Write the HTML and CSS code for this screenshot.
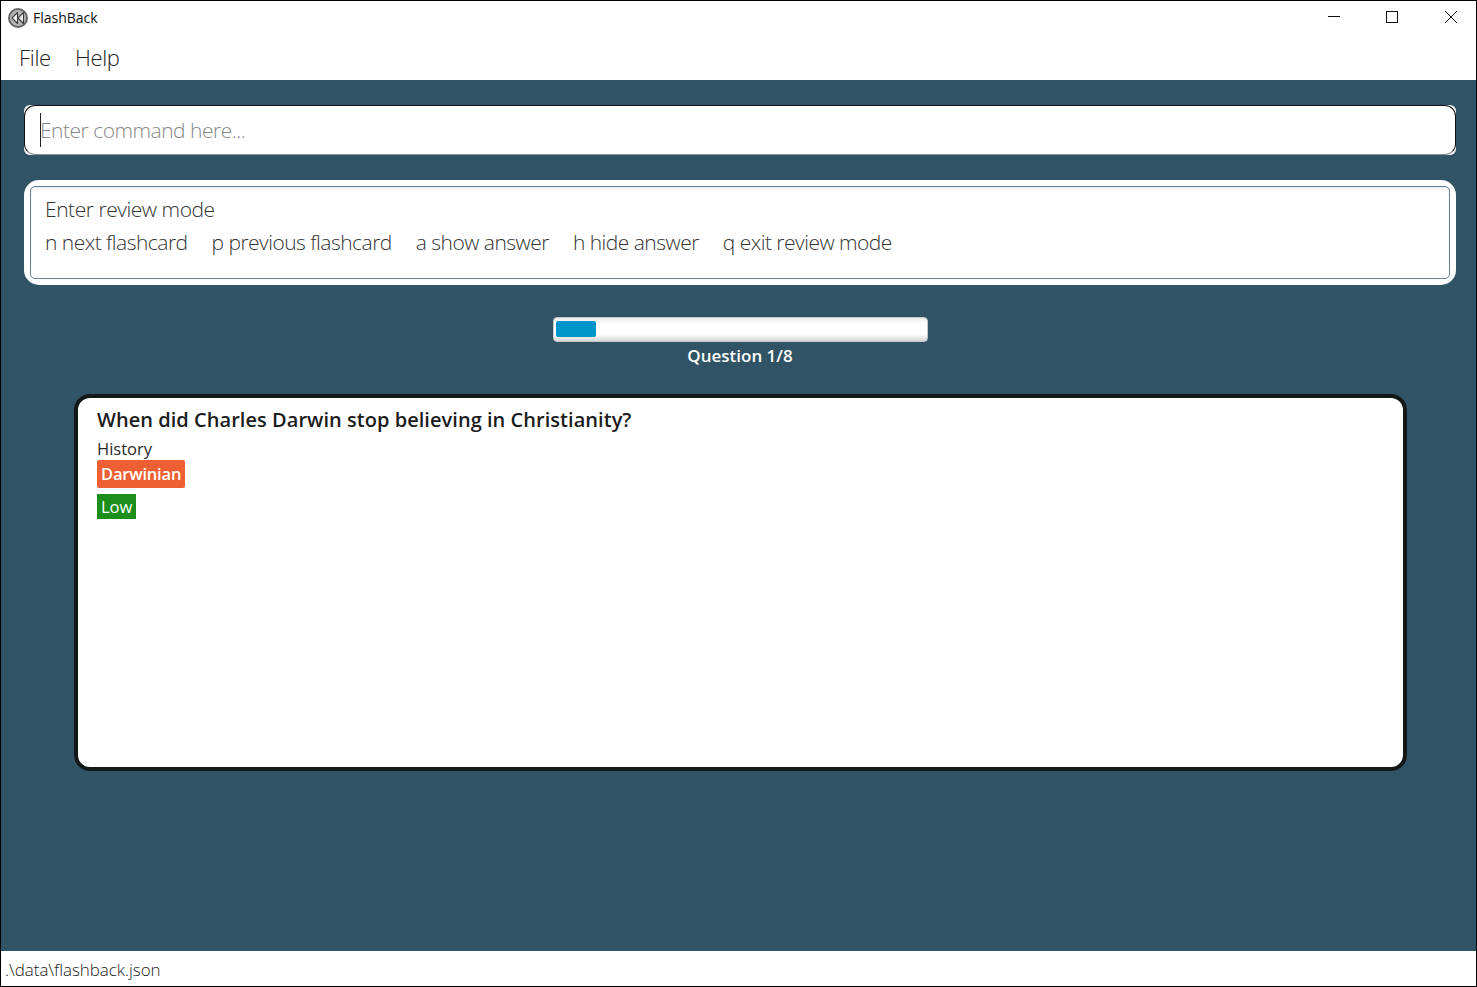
FILE: index.html
```html
<!DOCTYPE html>
<html lang="en">
<head>
<meta charset="utf-8">
<title>FlashBack</title>
<link rel="stylesheet" href="styles.css">
</head>
<body>
<div class="window">
  <header class="titlebar">
    <div class="title-left">
      <svg class="app-icon" width="20" height="20" viewBox="0 0 20 20">
        <circle cx="10" cy="10" r="9" fill="#b4b4b4" stroke="#666" stroke-width="2"/>
        <path d="M9.5 4.5 L4 10 L9.5 15.5 Z M15.5 4.5 L10 10 L15.5 15.5 Z" fill="#f4f4f4" stroke="#3c3c3c" stroke-width="1.1" stroke-linejoin="round"/>
      </svg>
      <span class="app-name">FlashBack</span>
    </div>
    <div class="win-controls">
      <svg class="win-min" width="12" height="12" viewBox="0 0 12 12"><path d="M0 5.5H12" stroke="#111" stroke-width="1" fill="none"/></svg>
      <svg width="12" height="12" viewBox="0 0 12 12"><rect x="0.5" y="0.5" width="11" height="11" stroke="#111" stroke-width="1" fill="none"/></svg>
      <svg width="12" height="12" viewBox="0 0 12 12"><path d="M0 0L12 12M12 0L0 12" stroke="#111" stroke-width="1" fill="none"/></svg>
    </div>
  </header>
  <nav class="menubar">
    <span class="menu-item">File</span>
    <span class="menu-item">Help</span>
  </nav>
  <main class="content">
    <div class="command-outer">
      <div class="command-box">
        <span class="caret"></span>
        <span class="placeholder">Enter command here...</span>
      </div>
    </div>
    <section class="result-outer">
      <div class="result-inner">
        <div class="result-line">Enter review mode</div>
        <div class="result-keys">
          <span>n next flashcard</span>
          <span>p previous flashcard</span>
          <span>a show answer</span>
          <span>h hide answer</span>
          <span>q exit review mode</span>
        </div>
      </div>
    </section>
    <section class="progress-wrap">
      <div class="progress-track"><div class="progress-fill"></div></div>
      <div class="progress-label">Question 1/8</div>
    </section>
    <article class="card">
      <h1 class="question">When did Charles Darwin stop believing in Christianity?</h1>
      <div class="category">History</div>
      <div class="tag-row"><span class="tag">Darwinian</span></div>
      <div class="level-row"><span class="level">Low</span></div>
    </article>
  </main>
  <footer class="statusbar">.\data\flashback.json</footer>
</div>
</body>
</html>
```

FILE: styles.css
```css
* { box-sizing: border-box; }
html, body { margin: 0; height: 100%; overflow: hidden; }
body { font-family: "Open Sans", "Noto Sans", "Liberation Sans", sans-serif; background: #fff; }

.window {
  width: 1477px;
  height: 987px;
  border: 1px solid #000;
  display: flex;
  flex-direction: column;
}

.titlebar {
  height: 33px;
  flex: none;
  display: flex;
  justify-content: space-between;
  align-items: center;
  padding: 0 19px 0 7px;
}
.title-left { display: flex; align-items: center; gap: 5px; }
.app-icon { display: block; }
.app-name { font-size: 14px; color: #111; font-weight: 400; }
.win-controls { display: flex; gap: 47px; align-items: center; margin-top: -2px; }
.win-controls svg { display: block; }
.win-controls .win-min { margin-right: -1px; }

.menubar {
  height: 46px;
  flex: none;
  display: flex;
  align-items: center;
  gap: 24px;
  padding: 4px 0 5px 18px;
}
.menu-item { font-size: 22px; font-weight: 300; color: #222; letter-spacing: -0.3px; }

.content {
  flex: 1;
  background: #305366;
  padding: 25px 20px 0 23px;
  display: flex;
  flex-direction: column;
}

.command-outer {
  height: 50px;
  flex: none;
  background: #fff;
  border-radius: 6px;
}
.command-box {
  height: 100%;
  border: 1px solid #111;
  border-bottom: 1px solid #8f8f8f;
  border-radius: 11px;
  display: flex;
  align-items: center;
  padding-left: 15px;
}
.caret { width: 1px; height: 34px; background: #222; flex: none; }
.placeholder { font-size: 21px; font-weight: 300; color: #888; letter-spacing: -0.5px; margin-left: -1px; }

.result-outer {
  margin-top: 25px;
  height: 105px;
  flex: none;
  background: #fff;
  border-radius: 15px;
  padding: 6px;
}
.result-inner {
  height: 93px;
  border: 1px solid #64838f;
  border-radius: 5px;
  padding: 8px 14px;
  color: #333;
  font-size: 21px;
  font-weight: 300;
  letter-spacing: -0.45px;
  box-shadow: inset 0 2px 3px -1px #e4e4ea;
}
.result-line { line-height: 29px; height: 29px; }
.result-keys { display: flex; gap: 24px; line-height: 29px; margin-top: 4px; letter-spacing: -0.52px; }

.progress-wrap {
  margin-top: 32px;
  display: flex;
  flex-direction: column;
  align-items: center;
  flex: none;
  padding-left: 1px;
}
.progress-track {
  width: 375px;
  height: 25px;
  border: 1px solid #c8c8c8;
  border-radius: 4px;
  background: linear-gradient(#ececec, #fff 25%, #fff 70%, #d6d6d6);
  padding: 3px 2px;
}
.progress-fill {
  width: 40px;
  height: 16px;
  background: #0096c9;
  border-radius: 2px;
}
.progress-label {
  color: #fff;
  font-size: 17px;
  font-weight: 600;
  line-height: 22px;
  margin: 3px 1px 0 0;
}

.card {
  margin: 27px 49px 0 50px;
  height: 377px;
  flex: none;
  background: #fff;
  border: 4px solid #131718;
  border-radius: 16px;
  padding: 8px 19px;
  color: #1c1c1c;
}
.question { margin: 0; font-size: 20px; font-weight: 600; line-height: 28px; letter-spacing: 0.04px; }
.category { font-size: 16.5px; font-weight: 400; line-height: 23px; margin-top: 3px; color: #2a2a2a; }
.tag-row { display: flex; }
.tag {
  background: #ee5f33;
  color: #fff;
  font-size: 16.5px;
  font-weight: 600;
  letter-spacing: -0.2px;
  line-height: 28px;
  height: 28px;
  padding: 0 4px;
  border-radius: 2px;
}
.level-row { display: flex; margin-top: 6px; }
.level {
  background: #1b8e1b;
  color: #fff;
  font-size: 16.5px;
  line-height: 25px;
  height: 25px;
  padding: 0 4px;
}

.statusbar {
  height: 35px;
  flex: none;
  font-size: 17px;
  font-weight: 300;
  letter-spacing: -0.05px;
  color: #222;
  line-height: 37px;
  padding-left: 4px;
}
```
